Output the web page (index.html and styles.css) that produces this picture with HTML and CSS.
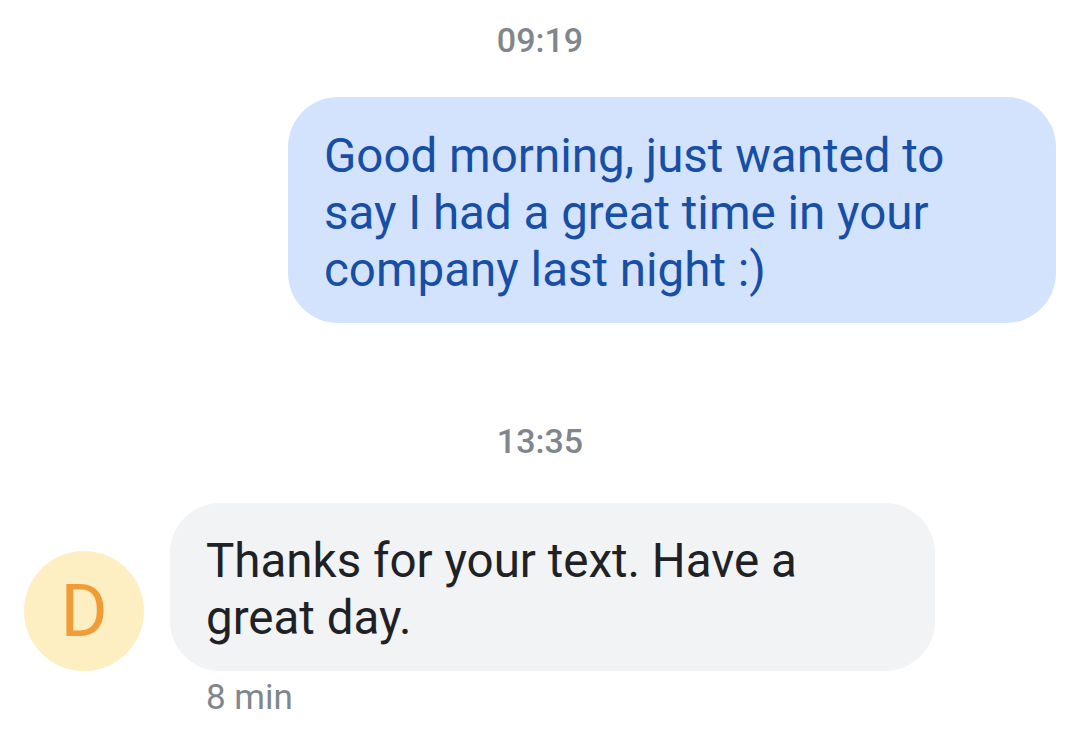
FILE: index.html
```html
<!DOCTYPE html>
<html lang="en">
<head>
<meta charset="utf-8">
<title>Messages</title>
<link rel="stylesheet" href="styles.css">
</head>
<body>
<main class="thread">
  <div class="stamp stamp-first">09:19</div>
  <div class="row row-out">
    <div class="bubble bubble-out">Good morning, just wanted to say I had a great time in your company last night :)</div>
  </div>
  <div class="stamp stamp-second">13:35</div>
  <div class="row row-in">
    <div class="avatar">D</div>
    <div class="bubble bubble-in">Thanks for your text. Have a great day.</div>
  </div>
  <div class="meta">8 min</div>
</main>
</body>
</html>
```

FILE: styles.css
```css
html, body {
  margin: 0;
  padding: 0;
  background: #ffffff;
}

body {
  width: 1080px;
  height: 730px;
  overflow: hidden;
  font-family: Roboto, "Noto Sans", Arial, sans-serif;
}

.thread {
  display: flex;
  flex-direction: column;
  padding-top: 20px;
}

.stamp {
  text-align: center;
  font-size: 34px;
  line-height: 40px;
  font-weight: 500;
  color: #80868b;
}

.stamp-second {
  margin-top: 98px;
}

.row {
  display: flex;
}

.row-out {
  justify-content: flex-end;
  padding-right: 24px;
  margin-top: 37px;
}

.row-in {
  align-items: flex-end;
  padding-left: 24px;
  gap: 26px;
  margin-top: 42px;
}

.bubble {
  box-sizing: border-box;
  font-size: 47.5px;
  line-height: 57px;
  border-radius: 50px;
}

.bubble-out {
  width: 768px;
  padding: 31px 36px 24px;
  background: #d3e3fd;
  color: #174ea6;
}

.bubble-in {
  width: 765px;
  padding: 30px 36px 24px;
  background: #f1f3f4;
  color: #202124;
}

.avatar {
  flex: 0 0 auto;
  width: 120px;
  height: 120px;
  border-radius: 50%;
  background: #feefc3;
  color: #f09d38;
  display: flex;
  align-items: center;
  justify-content: center;
  font-size: 72px;
  font-weight: 400;
}

.meta {
  margin-left: 206px;
  margin-top: 7px;
  font-size: 35px;
  line-height: 40px;
  color: #80868b;
}
```
